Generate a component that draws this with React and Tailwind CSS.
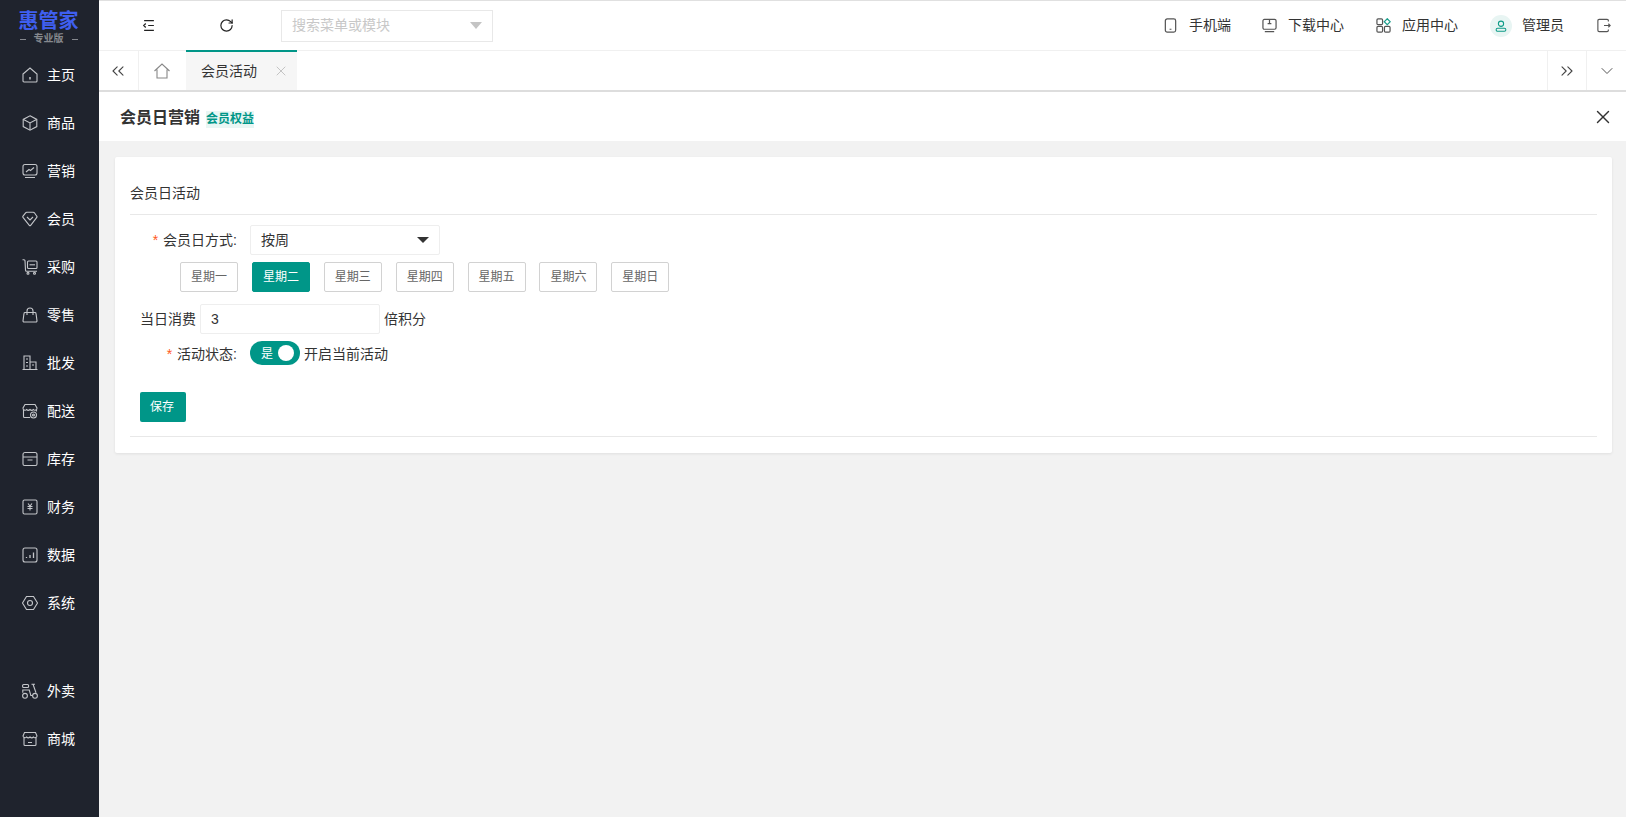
import { ChevronDown, ChevronsLeft, ChevronsRight, RotateCw, X } from "lucide-react";

const font = { fontFamily: '"Liberation Sans", "Noto Sans CJK SC", sans-serif' };

const Ico = ({ children, className = "h-[16px] w-[16px]" }) => (
  <svg viewBox="0 0 16 16" fill="none" stroke="currentColor" strokeWidth="1.1" className={className}>
    {children}
  </svg>
);

const navTop = [
  ["主页", <><path d="M1 7l7-6 7 6v7a1 1 0 0 1-1 1H2a1 1 0 0 1-1-1z" /><path d="M8 10v2.500" strokeWidth="1.500" /></>],
  ["商品", <><path d="M8 .8l6.800 3.600v7.200L8 15.200l-6.800-3.600V4.400z" /><path d="M1.500 4.500L8 8l6.500-3.500M8 8v7" /></>],
  ["营销", <><rect x="1" y="1.500" width="14" height="10.500" rx="2" /><path d="M4 9l3-2.500 1.500 1L12 4.500M3 14.500h10" /></>],
  ["会员", <><path d="M4.800 1.200h6.400a1.500 1.500 0 0 1 1.200.6l2.400 3.400a1 1 0 0 1 0 1.200L8.700 14.300a1 1 0 0 1-1.400 0L1 6.400a1 1 0 0 1 0-1.200l2.600-3.400a1.500 1.500 0 0 1 1.200-.6z" /><path d="M5 6l3 3 3-3" /></>],
  ["采购", <><path d="M.5 .8h1.500a1 1 0 0 1 1 1l.5 9.500a1 1 0 0 0 1 1H15" /><rect x="5.500" y="2" width="9.500" height="7.500" rx="1" /><path d="M7.500 5.800h5.500" /><circle cx="6" cy="14.300" r="1" /><circle cx="12.500" cy="14.300" r="1" /></>],
  ["零售", <><path d="M3 5.500h10a1 1 0 0 1 1 .9l1 7.500a1 1 0 0 1-1 1.100H2a1 1 0 0 1-1-1.100l1-7.500a1 1 0 0 1 1-.9z" /><path d="M5 8V4a3 3 0 0 1 6 0v4" /></>],
  ["批发", <><path d="M2 14.500V1h6v13.500M8 7h6v7.500M.5 14.500h15M4 4h2M4 7.500h2M10 10h2M4 11h2" /></>],
  ["配送", <><path d="M1.500 7v6.500a1 1 0 0 0 1 1H8M14.500 7v1.500" /><path d="M3 1.500h10L15 5a2 2 0 0 1-3.500 1.500 2.500 2.500 0 0 1-3.500 0 2.500 2.500 0 0 1-3.500 0A2 2 0 0 1 1 5z" /><circle cx="11.500" cy="12" r="3" /><circle cx="11.500" cy="12" r="1" /></>],
  ["库存", <><path d="M3 1.500h10a2 2 0 0 1 2 2V13a1.500 1.500 0 0 1-1.500 1.500h-11A1.500 1.500 0 0 1 1 13V3.500a2 2 0 0 1 2-2z" /><path d="M1 6h14M5.500 9h5" /></>],
  ["财务", <><rect x="1" y="1" width="14" height="14" rx="1.500" /><path d="M6 4.500l2 2.500 2-2.500M5.500 7.500h5M5.500 9.500h5M8 7v4.500" /></>],
  ["数据", <><rect x="1" y="1" width="14" height="14" rx="2" /><path d="M4.500 11v-1M8 11V8M11.500 11V5.500" strokeWidth="1.300" /></>],
  ["系统", <><path d="M4.500 1.500h7L15.500 8l-4 6.500h-7L.5 8z" /><circle cx="8" cy="8" r="2.500" /></>],
];

const navBottom = [
  ["外卖", <><rect x=".6" y="1.500" width="6" height="3" rx="1" /><circle cx="3" cy="12.800" r="2.400" /><circle cx="13" cy="12.800" r="2.400" /><path d="M.8 9.800V7h6.500l1.500 5.500h1.700M9.500 1.300h3.500M11 1.300l3 8.500" /></>],
  ["商城", <><path d="M2 6.500v7a1 1 0 0 0 1 1h10a1 1 0 0 0 1-1v-7" /><path d="M2.500 1.500h11L15 5a2 2 0 0 1-3.500 1 2.500 2.500 0 0 1-3.500 0 2.500 2.500 0 0 1-3.500 0A2 2 0 0 1 1 5zM6 11.500h4" /></>],
];

const NavItem = ({ icon, label }) => (
  <div className="flex h-[48px] items-center pl-[22px] text-white">
    <span className="text-[#c4c6ca]">
      <Ico>{icon}</Ico>
    </span>
    <span className="ml-[9px] text-[14px]">{label}</span>
  </div>
);

const HeaderLink = ({ icon, label, className }) => (
  <div className={`flex items-center text-[14px] text-[#333] ${className}`}>
    {icon}
    <span className="ml-[11px]">{label}</span>
  </div>
);

const days = ["星期一", "星期二", "星期三", "星期四", "星期五", "星期六", "星期日"];

export default function App() {
  return (
    <div className="flex h-[817px] w-[1626px] overflow-hidden bg-[#f2f2f2]" style={font}>
      <aside className="w-[99px] shrink-0 bg-[#1f232d]">
        <div className="flex h-[51px] flex-col items-center pr-[2px] pt-[11px]">
          <div className="text-[20px] font-bold leading-[21px] text-[#3f5ff0]">惠管家</div>
          <div className="flex items-center gap-[8px] text-[10px] font-bold leading-[14px] text-[#85888e]">
            <span className="h-px w-[6px] bg-[#85888e]" />
            <span>专业版</span>
            <span className="h-px w-[6px] bg-[#85888e]" />
          </div>
        </div>
        {navTop.map(([label, icon]) => (
          <NavItem key={label} label={label} icon={icon} />
        ))}
        <div className="h-[40px]" />
        {navBottom.map(([label, icon]) => (
          <NavItem key={label} label={label} icon={icon} />
        ))}
      </aside>

      <div className="flex min-w-0 flex-1 flex-col">
        <header className="flex h-[51px] items-center border-y border-t-[#e0e0e0] border-b-[#f0f0f0] bg-white">
          <div className="flex w-[182px] items-center pl-[43px]">
            <Ico className="h-[13px] w-[14px] text-[#222]">
              <path d="M2 2h12M7 8h7M2 14h12M4 5.500L1.500 8 4 10.500" strokeWidth="1.500" />
            </Ico>
            <RotateCw size={15} strokeWidth={1.9} className="ml-[63px] text-[#222]" />
          </div>
          <div className="flex h-[32px] w-[212px] items-center justify-between border border-[#e8e8e8] pl-[10px] pr-[10px] text-[14px] text-[#c8c8c8]">
            搜索菜单或模块
            <span className="h-0 w-0 border-x-[6px] border-t-[7px] border-x-transparent border-t-[#c4c4c4]" />
          </div>
          <div className="ml-auto flex items-center">
            <HeaderLink
              label="手机端"
              className="w-[99px]"
              icon={
                <Ico className="h-[15px] w-[15px] text-[#555]">
                  <rect x="2.500" y="1" width="11" height="14" rx="2" strokeWidth="1.300" />
                  <path d="M7 12h2" />
                </Ico>
              }
            />
            <HeaderLink
              label="下载中心"
              className="w-[114px]"
              icon={
                <Ico className="h-[15px] w-[15px] text-[#555]">
                  <rect x="1" y="1.500" width="14" height="10.500" rx="1.500" strokeWidth="1.300" />
                  <path d="M8 2v4M6 6h4M3 14.500h10" strokeWidth="1.300" />
                </Ico>
              }
            />
            <HeaderLink
              label="应用中心"
              className="w-[114px]"
              icon={
                <Ico className="h-[15px] w-[15px] text-[#555]">
                  <rect x="1" y="1" width="6" height="6" rx="1.200" strokeWidth="1.300" />
                  <rect x="1" y="9" width="6" height="6" rx="1.200" strokeWidth="1.300" />
                  <rect x="9" y="9" width="6" height="6" rx="1.200" strokeWidth="1.300" />
                  <path d="M12 .8L15.200 4 12 7.200 8.800 4z" stroke="#1b9e8c" strokeWidth="1.300" />
                </Ico>
              }
            />
            <div className="flex items-center text-[14px] text-[#333]">
              <span className="grid h-[22px] w-[22px] place-items-center rounded-full bg-[#e8f5f3] text-[#0d9b87]">
                <Ico className="h-[12px] w-[12px]">
                  <circle cx="8" cy="5" r="3.500" strokeWidth="1.400" />
                  <rect x="1.500" y="11" width="13" height="4" rx="2" strokeWidth="1.400" />
                </Ico>
              </span>
              <span className="ml-[10px]">管理员</span>
            </div>
            <Ico className="ml-[33px] mr-[15px] h-[15px] w-[14px] text-[#555]">
              <path d="M13 3.500V2.500a1.500 1.500 0 0 0-1.500-1.500h-9A1.500 1.500 0 0 0 1 2.500v11A1.500 1.500 0 0 0 2.500 15h9a1.500 1.500 0 0 0 1.500-1.500v-1M8 8h7M13 6l2 2-2 2" strokeWidth="1.300" />
            </Ico>
          </div>
        </header>

        <div className="flex h-[41px] items-stretch border-b-2 border-[#dddddd] bg-white">
          <div className="grid w-[40px] place-items-center border-r border-[#f0f0f0]">
            <ChevronsLeft size={20} strokeWidth={1.3} className="mr-[1px] text-[#444]" />
          </div>
          <div className="grid w-[47px] place-items-center pr-[2px]">
            <Ico className="h-[16px] w-[16px] text-[#888]">
              <path d="M.5 8L8 1l7.500 7M3 6.500V15h10V6.500" />
            </Ico>
          </div>
          <div className="-mt-px flex w-[111px] items-center border-t-2 border-[#009688] bg-[#f6f6f6] pl-[15px] text-[14px] text-[#333]">
            会员活动
            <X size={16} strokeWidth={1.5} className="ml-[16px] text-[#c4c4c4]" />
          </div>
          <div className="ml-auto grid w-[40px] place-items-center border-x border-[#f0f0f0]">
            <ChevronsRight size={20} strokeWidth={1.3} className="text-[#444]" />
          </div>
          <div className="grid w-[39px] place-items-center">
            <ChevronDown size={20} strokeWidth={1.2} className="text-[#555]" />
          </div>
        </div>

        <div className="flex h-[49px] items-center bg-white pl-[21px] pr-[12px]">
          <span className="mt-[3px] text-[16px] font-bold text-[#333]">会员日营销</span>
          <span className="ml-[6px] mt-[5px] bg-[#e9f6f4] text-[12px] font-bold leading-[17px] text-[#009688]">会员权益</span>
          <X size={22} strokeWidth={1.5} className="ml-auto text-[#333]" />
        </div>

        <main className="pl-[16px] pr-[14px] pt-[16px]">
          <section className="h-[296px] rounded-[2px] bg-white px-[15px] shadow-[0_1px_3px_rgba(0,0,0,0.08)]">
            <div className="flex h-[58px] items-end border-b border-[#e8e8e8] pb-[11px] text-[14px] leading-[20px] text-[#333]">会员日活动</div>

            <div className="mt-[10px] flex items-center text-[14px] text-[#333]">
              <span className="flex w-[120px] justify-end pr-[13px]">
                <span className="mr-[5px] text-[#ff5722]">*</span>会员日方式:
              </span>
              <div className="flex h-[30px] w-[190px] items-center justify-between rounded-[2px] border border-[#eeeeee] pl-[10px] pr-[10px]">
                按周
                <span className="h-0 w-0 border-x-[6px] border-t-[6px] border-x-transparent border-t-[#333]" />
              </div>
            </div>

            <div className="mt-[7px] flex gap-[13.9px] pl-[50px]">
              {days.map((day) => (
                <button
                  key={day}
                  type="button"
                  className={`h-[30px] w-[58px] rounded-[2px] border text-[12px] ${
                    day === "星期二"
                      ? "border-[#009688] bg-[#009688] text-white"
                      : "border-[#d2d2d2] bg-white text-[#666]"
                  }`}
                >
                  {day}
                </button>
              ))}
            </div>

            <div className="mt-[12px] flex items-center text-[14px] text-[#333]">
              <span className="ml-[10px] mr-[4px]">当日消费</span>
              <div className="flex h-[30px] w-[180px] items-center rounded-[2px] border border-[#eeeeee] pl-[10px]">3</div>
              <span className="ml-[4px]">倍积分</span>
            </div>

            <div className="mt-[7px] flex items-center text-[14px] text-[#333]">
              <span className="flex w-[120px] justify-end pr-[13px] pt-[3px]">
                <span className="mr-[5px] text-[#ff5722]">*</span>活动状态:
              </span>
              <div className="relative flex h-[24px] w-[50px] items-center rounded-full bg-[#009688] pl-[11px] pt-[2px] text-[12px] text-white">
                是
                <span className="absolute right-[6px] top-[4px] h-[16px] w-[16px] rounded-full bg-white" />
              </div>
              <span className="ml-[4px] pt-[3px]">开启当前活动</span>
            </div>

            <div className="mt-[27px] border-b border-[#e8e8e8] pb-[14px] pl-[10px]">
              <button type="button" className="h-[30px] w-[46px] rounded-[2px] bg-[#009688] pr-[2px] text-[12px] text-white">
                保存
              </button>
            </div>
          </section>
        </main>
      </div>
    </div>
  );
}
